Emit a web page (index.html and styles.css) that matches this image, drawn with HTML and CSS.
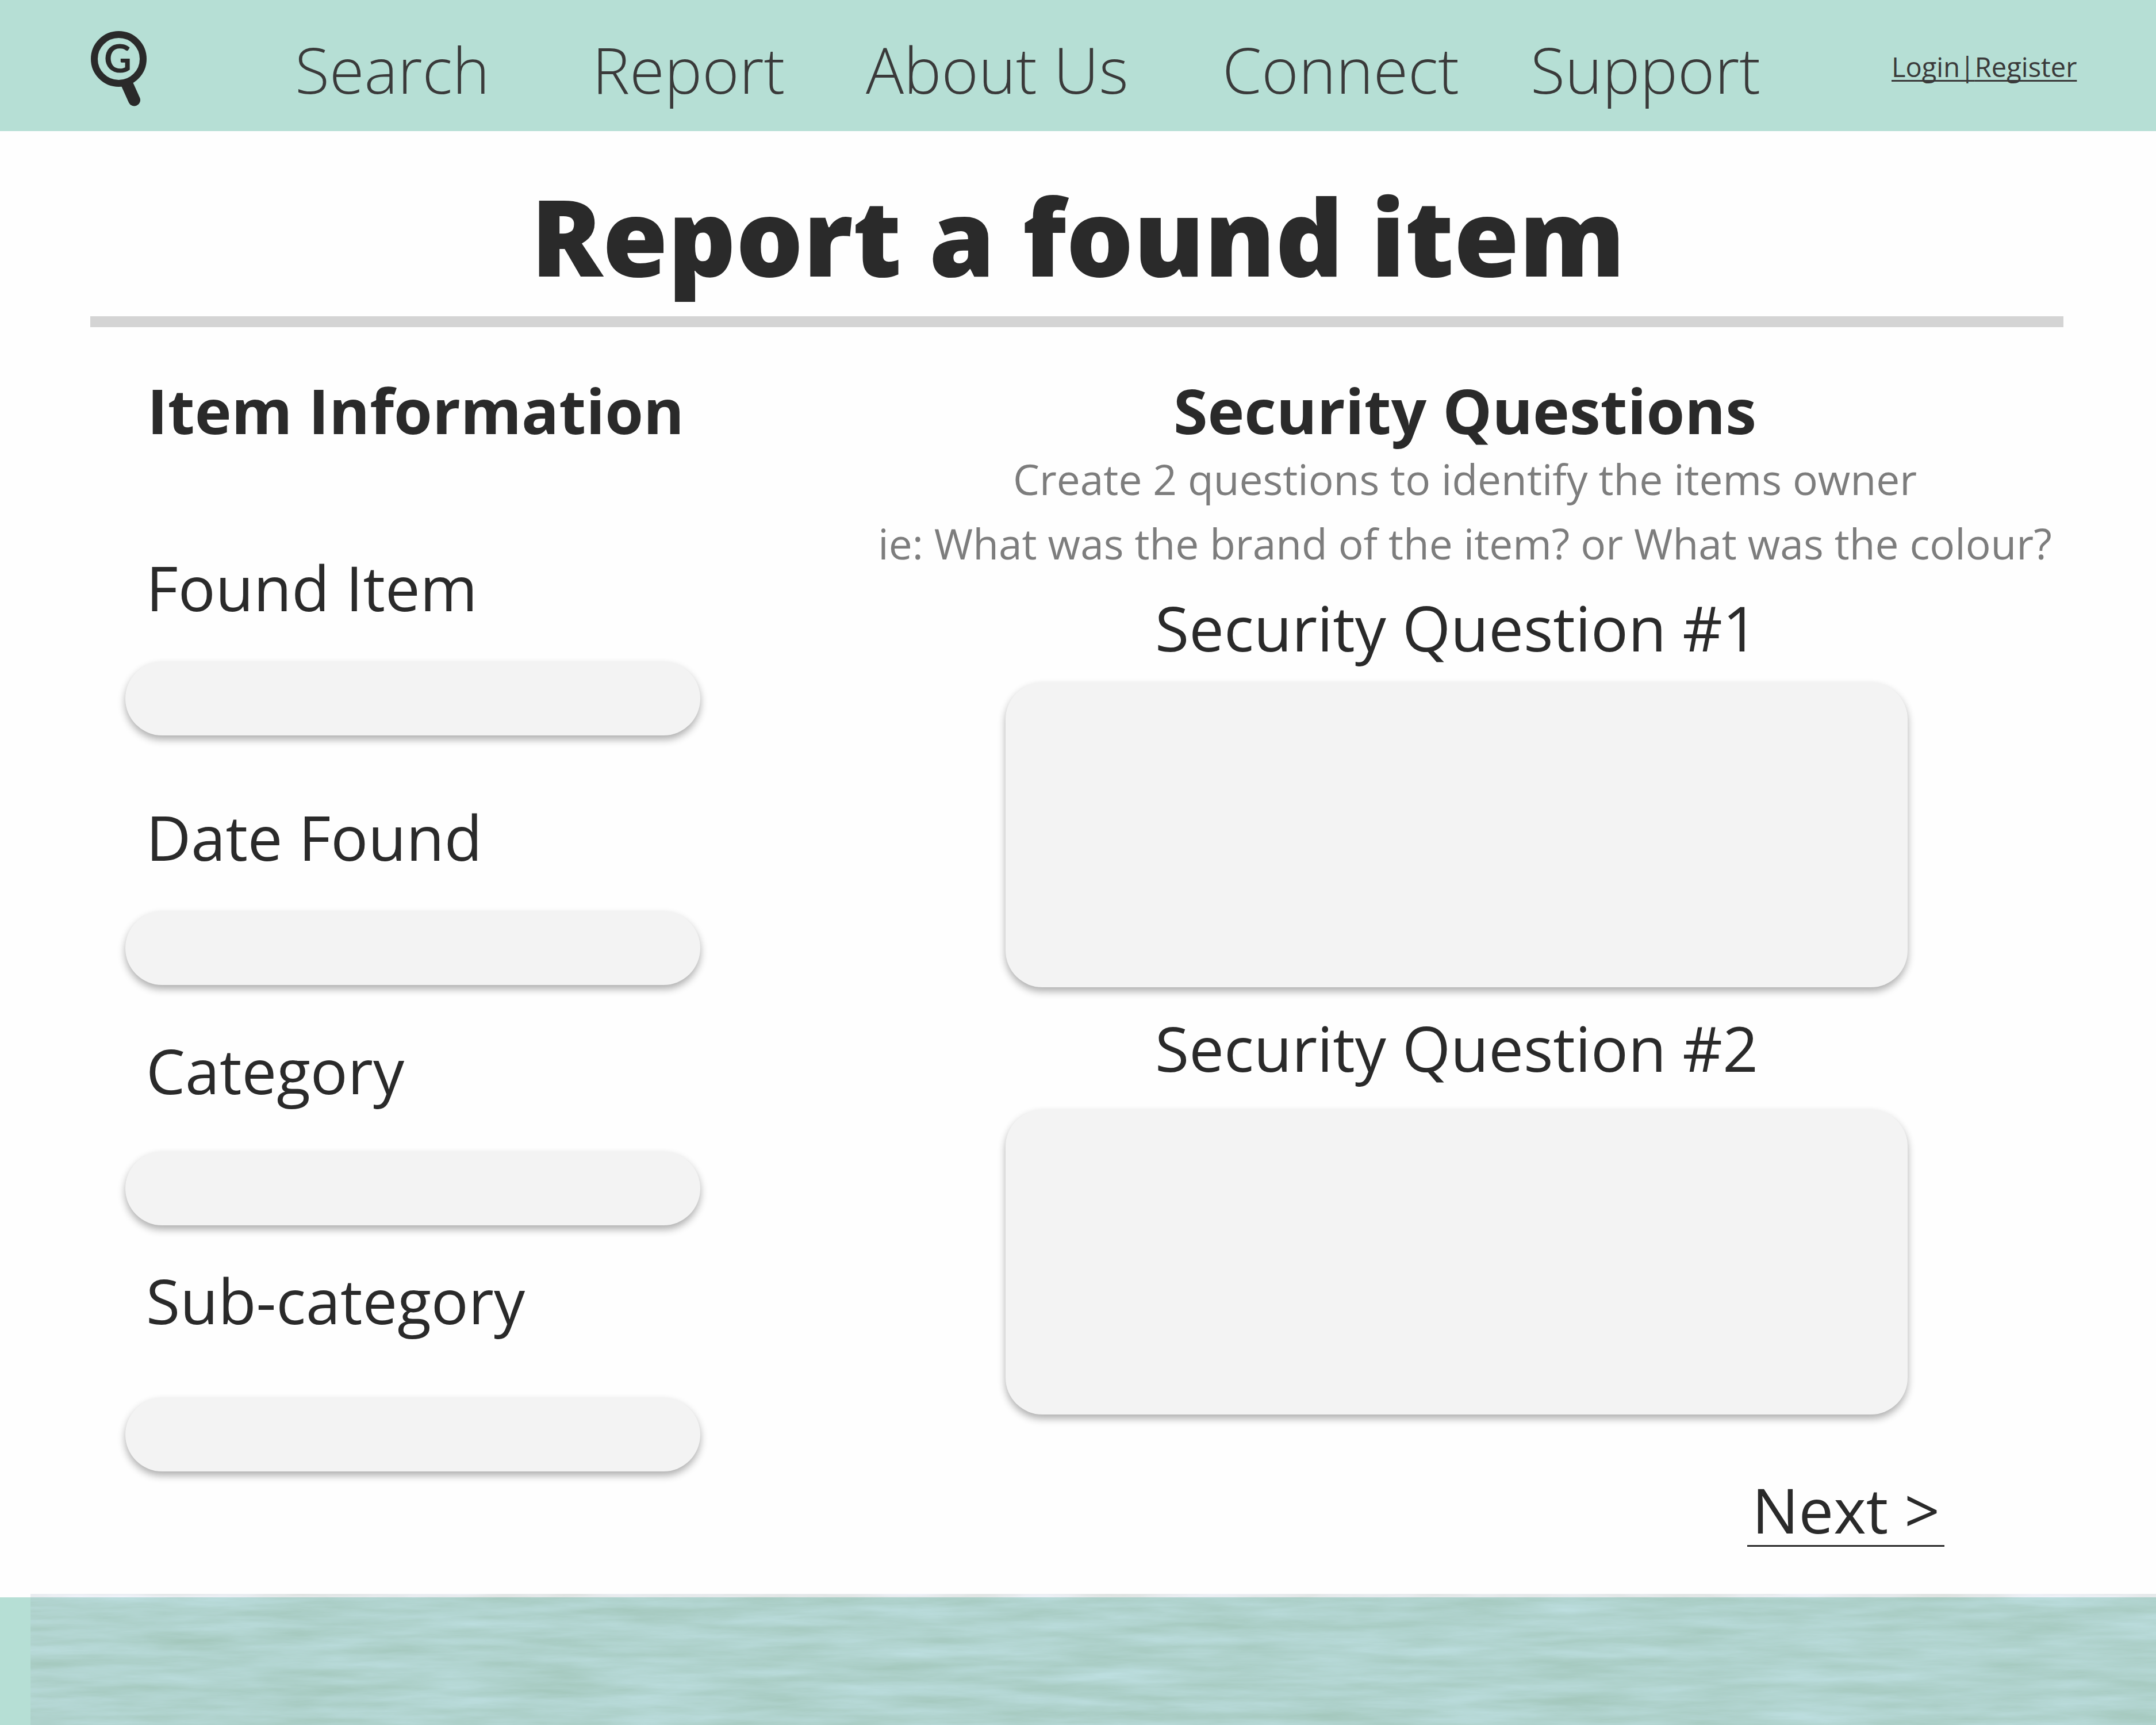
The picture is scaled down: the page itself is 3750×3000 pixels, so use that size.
FILE: index.html
```html
<!DOCTYPE html>
<html lang="en">
<head>
  <meta charset="utf-8">
  <meta name="viewport" content="width=device-width, initial-scale=1">
  <title>Report a found item</title>
  <link rel="stylesheet" href="styles.css">
</head>
<body>
  <header class="site-header">
    <a class="logo" href="#" aria-label="Home">
      <svg class="logo-mark" viewBox="0 0 98 132" aria-hidden="true">
        <line x1="62" y1="90" x2="75.500" y2="120" stroke="#2a2a2a" stroke-width="21" stroke-linecap="round"/>
        <circle cx="48.500" cy="48.500" r="42.500" fill="#b6dfd5" stroke="#2a2a2a" stroke-width="12"/>
        <text class="logo-letter" x="47" y="72" text-anchor="middle">G</text>
      </svg>
    </a>
    <nav class="main-nav" aria-label="Main">
      <a href="#">Search</a>
      <a href="#">Report</a>
      <a href="#">About Us</a>
      <a href="#">Connect</a>
      <a href="#">Support</a>
    </nav>
    <div class="account"><a href="#">Login</a>|<a href="#">Register</a></div>
  </header>

  <main>
    <h1 class="page-title">Report a found item</h1>
    <hr class="rule">
    <form class="report-form">
      <section class="item-info">
        <h2>Item Information</h2>
        <div class="field">
          <label for="found-item">Found Item</label>
          <input id="found-item" type="text">
        </div>
        <div class="field field-date">
          <label for="date-found">Date Found</label>
          <input id="date-found" type="text">
        </div>
        <div class="field field-category">
          <label for="category">Category</label>
          <input id="category" type="text">
        </div>
        <div class="field field-sub">
          <label for="sub-category">Sub-category</label>
          <input id="sub-category" type="text">
        </div>
      </section>
      <section class="security">
        <h2>Security Questions</h2>
        <p class="hint">Create 2 questions to identify the items owner<br>ie: What was the brand of the item? or What was the colour?</p>
        <div class="questions">
          <label for="question-1">Security Question #1</label>
          <textarea id="question-1"></textarea>
          <label class="second" for="question-2">Security Question #2</label>
          <textarea class="second" id="question-2"></textarea>
        </div>
        <a class="next" href="#">Next &gt;</a>
      </section>
    </form>
  </main>

  <footer class="site-footer">
    <svg class="water" aria-hidden="true">
      <filter id="waves" x="0" y="0" width="100%" height="100%" color-interpolation-filters="sRGB">
        <feTurbulence type="fractalNoise" baseFrequency="0.005 0.045" numOctaves="6" seed="8"/>
        <feColorMatrix values="0.500 0 0 0 0.370  0.450 0 0 0 0.450  0.700 0 0 0 0.370  0 0 0 0 0.240"/>
      </filter>
      <rect width="100%" height="100%" filter="url(#waves)"/>
    </svg>
  </footer>
</body>
</html>
```
FILE: styles.css
```css
* {
  box-sizing: border-box;
}

body {
  margin: 0;
  min-height: 100vh;
  display: flex;
  flex-direction: column;
  background: #fefefe;
  color: #2a2a2a;
  font-family: "Open Sans", "Noto Sans", sans-serif;
}

h1,
h2,
p {
  margin: 0;
}

a {
  color: inherit;
  text-decoration: none;
}

.site-header {
  display: grid;
  grid-template-columns: 513fr 2777fr 460fr;
  align-items: start;
  padding-bottom: 42px;
  background: #b6dfd5;
  color: #3a3a3a;
}

.logo {
  margin: 54px 0 0 158px;
}

.logo-mark {
  display: block;
  width: 98px;
  height: 132px;
}

.logo-letter {
  font-family: Lato, sans-serif;
  font-size: 66px;
  font-weight: 700;
  fill: #2a2a2a;
}

.main-nav {
  display: grid;
  grid-template-columns: 517fr 476fr 620fr 536fr 628fr;
  padding-top: 55px;
  font-size: 110px;
  font-weight: 300;
  line-height: 130px;
  white-space: nowrap;
}

.account {
  padding-top: 86px;
  font-size: 47px;
  line-height: 60px;
  white-space: nowrap;
  text-decoration: underline 3px;
  text-decoration-skip-ink: none;
  text-underline-offset: 5px;
}

.page-title {
  padding-top: 82px;
  font-size: 184px;
  font-weight: 800;
  line-height: 200px;
  text-align: center;
}

.rule {
  height: 19px;
  margin: 40px 161px 0 157px;
  border: 0;
  background: #d4d4d4;
}

.report-form {
  display: grid;
  grid-template-columns: 1000fr 2090fr;
  column-gap: 285px;
  padding: 82px 157px 88px 218px;
}

h2,
label {
  display: block;
  font-size: 108px;
  line-height: 126px;
}

h2 {
  font-weight: 700;
}

.item-info h2 {
  padding-left: 38px;
  margin-bottom: 182px;
}

.field {
  display: flex;
  flex-direction: column;
  gap: 66px;
}

.field label {
  padding-left: 36px;
}

.field-date {
  margin-top: 114px;
}

.field-category {
  gap: 78px;
  margin-top: 86px;
}

.field-sub {
  gap: 106px;
  margin-top: 68px;
}

input,
textarea {
  display: block;
  width: 100%;
  padding: 24px 56px;
  border: 0;
  border-radius: 64px;
  background: #f3f3f3;
  box-shadow: 0 7px 14px rgba(0, 0, 0, 0.32);
  color: inherit;
  font: inherit;
  font-size: 64px;
}

input {
  height: 128px;
}

textarea {
  height: 530px;
  resize: none;
}

.security {
  display: flex;
  flex-direction: column;
  text-align: center;
}

.hint {
  color: #7d7d7d;
  font-size: 73px;
  line-height: 112px;
  white-space: nowrap;
}

.questions {
  padding: 28px 275px 0 246px;
}

.questions textarea {
  margin-top: 32px;
}

.questions label.second {
  margin-top: 43px;
}

.questions textarea.second {
  margin-top: 44px;
}

.next {
  align-self: flex-end;
  margin: 105px 211px 0 0;
  padding: 0 8px;
  border-bottom: 3px solid;
  font-size: 108px;
  line-height: 122px;
}

.site-footer {
  flex: 1;
  display: flex;
  min-height: 160px;
  background: #b6dfd5;
}

.water {
  flex: 1;
  margin: -6px 0 0 53px;
}
```
